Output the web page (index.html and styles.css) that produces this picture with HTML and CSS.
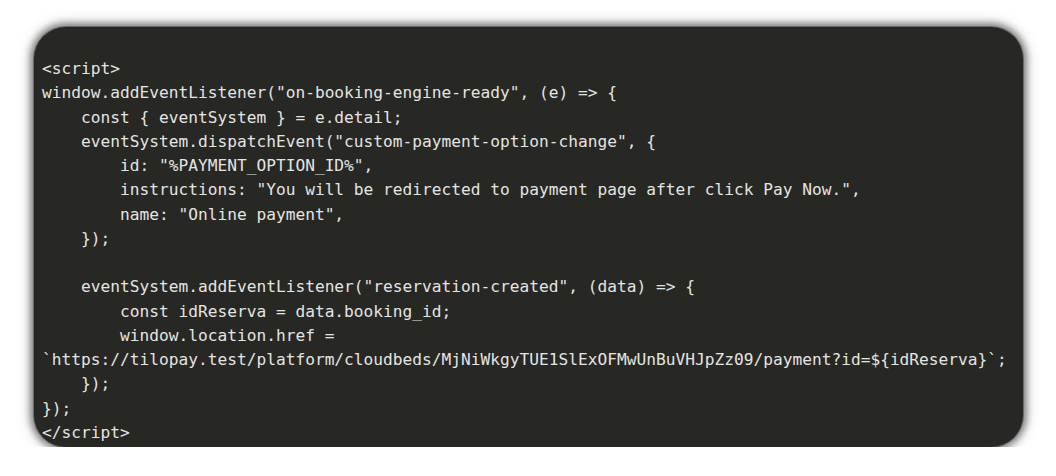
FILE: index.html
```html
<!DOCTYPE html>
<html>
<head>
<meta charset="utf-8">
<link rel="stylesheet" href="styles.css">
</head>
<body>
<div class="page">
<pre class="code">&lt;script&gt;
window.addEventListener("on-booking-engine-ready", (e) =&gt; {
    const { eventSystem } = e.detail;
    eventSystem.dispatchEvent("custom-payment-option-change", {
        id: "%PAYMENT_OPTION_ID%",
        instructions: "You will be redirected to payment page after click Pay Now.",
        name: "Online payment",
    });

    eventSystem.addEventListener("reservation-created", (data) =&gt; {
        const idReserva = data.booking_id;
        window.location.href =
`https://tilopay.test/platform/cloudbeds/MjNiWkgyTUE1SlExOFMwUnBuVHJpZz09/payment?id=${idReserva}`;
    });
});
&lt;/script&gt;</pre>
</div>
</body>
</html>
```
FILE: styles.css
```css
html, body {
  margin: 0;
  padding: 0;
  background: #ffffff;
}
.page {
  padding: 27px 0 0 34px;
}
.code {
  margin: 0;
  box-sizing: border-box;
  width: 989px;
  height: 420px;
  padding: 30px 0 0 8px;
  background: #272723;
  border-radius: 32px;
  color: #e4e4e2;
  font-family: "DejaVu Sans Mono", monospace;
  font-size: 16.2px;
  line-height: 24.27px;
  white-space: pre;
  overflow: hidden;
  box-shadow: 0 0 0 1px #6a6a6a, 0 0 6px 4px rgba(60, 60, 60, 0.55), 0 0 12px 6px rgba(120, 120, 120, 0.25);
}
```
